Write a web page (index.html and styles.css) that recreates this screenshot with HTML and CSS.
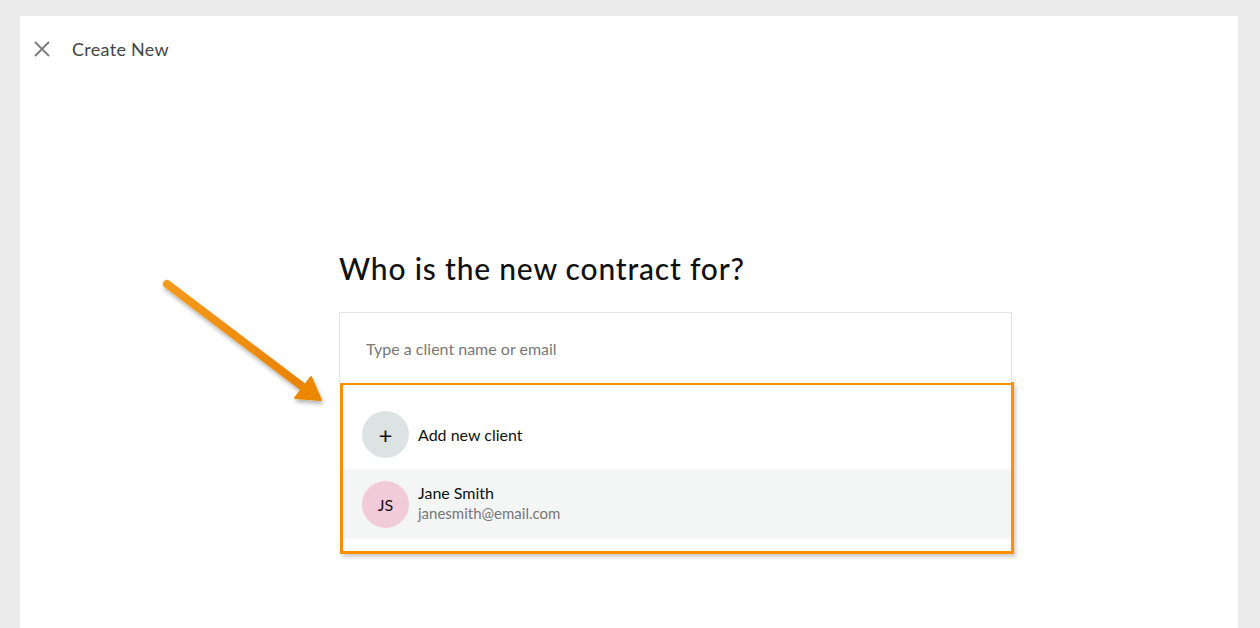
FILE: index.html
```html
<!DOCTYPE html>
<html lang="en">

<head>
  <meta charset="UTF-8">
  <meta name="viewport" content="width=device-width, initial-scale=1.0">
  <title>Create New</title>
  <link rel="stylesheet" href="styles.css">
</head>

<body>
  <main class="panel">
    <header class="topbar">
      <button class="close" aria-label="Close">
        <svg width="16" height="16" viewBox="0 0 16 16">
          <path d="M1 1 L15 15 M15 1 L1 15" stroke="#7a7a7a" stroke-width="1.8" fill="none" />
        </svg>
      </button>
      <span class="topbar-title">Create New</span>
    </header>

    <section class="picker">
      <h1>Who is the new contract for?</h1>
      <div class="search">
        <input type="text" placeholder="Type a client name or email">
      </div>
      <ul class="results">
        <li class="result">
          <span class="avatar avatar-add">+</span>
          <span class="result-name">Add new client</span>
        </li>
        <li class="result is-hover">
          <span class="avatar avatar-client">JS</span>
          <span class="result-text">
            <span class="result-name">Jane Smith</span>
            <span class="result-mail">janesmith@email.com</span>
          </span>
        </li>
      </ul>
    </section>

    <!-- annotation arrow -->
    <svg class="arrow" width="190" height="150" viewBox="0 0 190 150">
      <defs>
        <linearGradient id="arrowFill" x1="0" y1="0" x2="1" y2="1">
          <stop offset="0" stop-color="#f59a1e" />
          <stop offset="1" stop-color="#e98300" />
        </linearGradient>
        <filter id="arrowShadow" x="-20%" y="-20%" width="140%" height="140%">
          <feDropShadow dx="1" dy="3" stdDeviation="2" flood-color="#000" flood-opacity="0.3" />
        </filter>
      </defs>
      <g filter="url(#arrowShadow)">
        <line x1="22" y1="18" x2="158" y2="121" stroke="url(#arrowFill)" stroke-width="8" stroke-linecap="round" />
        <path d="M176 134 L150 132 L166 111 Z" fill="#ec8805" stroke="#ec8805" stroke-width="2" stroke-linejoin="round" />
      </g>
    </svg>
  </main>
</body>

</html>
```

FILE: styles.css
```css
html {
  box-sizing: border-box;
  font-family: "Lato", "Open Sans", sans-serif;
  font-size: 16px;
}

*,
*::before,
*::after {
  box-sizing: border-box;
}

body {
  margin: 0;
  background-color: #ebebeb;
  min-height: 100vh;
  overflow: hidden;
}

.panel {
  position: relative;
  margin: 16px 22px 0 20px;
  min-height: 612px;
  background-color: #fff;
}

.topbar {
  display: flex;
  align-items: center;
  height: 66px;
  padding-left: 14px;
}

.close {
  display: flex;
  padding: 0;
  border: none;
  background: none;
  cursor: pointer;
}

.topbar-title {
  margin-left: 22px;
  font-size: 18px;
  letter-spacing: 0.3px;
  color: #444;
}

.picker {
  width: 674px;
  margin: 168px 0 0 319px;
}

.picker h1 {
  margin: 0 0 26px;
  font-size: 30px;
  font-weight: 500;
  color: #111;
  letter-spacing: 0.8px;
}

.search {
  width: 673px;
  height: 71px;
  border: 1px solid #e5e5e5;
  border-bottom: none;
}

.search input {
  width: 100%;
  height: 100%;
  padding: 0 26px;
  border: none;
  outline: none;
  font-family: inherit;
  font-size: 16px;
}

.search input::placeholder {
  color: #777;
}

.results {
  list-style: none;
  width: 674px;
  margin: -1px 0 0 1px;
  padding: 1px 0 12px;
  border: 3px solid #ff8f00;
  box-shadow: 2px 3px 4px rgba(0, 0, 0, 0.2);
}

.result {
  display: flex;
  align-items: center;
  height: 83px;
  padding: 14px 0 0 19px;
  gap: 9px;
}

.result.is-hover {
  height: 70px;
  padding-top: 0;
  background-color: #f4f5f5;
}

.avatar {
  display: flex;
  justify-content: center;
  align-items: center;
  width: 47px;
  height: 47px;
  border-radius: 50%;
  font-size: 16px;
  color: #111;
}

.avatar-add {
  background-color: #dde2e2;
  font-size: 24px;
  font-weight: 400;
}

.avatar-client {
  background-color: #f2cbd8;
}

.result-text {
  display: flex;
  flex-direction: column;
  gap: 2px;
  margin-top: -4px;
}

.result-name {
  font-size: 16px;
  color: #111;
}

.result-mail {
  font-size: 15px;
  color: #777;
}

.arrow {
  position: absolute;
  left: 125px;
  top: 250px;
}
```
